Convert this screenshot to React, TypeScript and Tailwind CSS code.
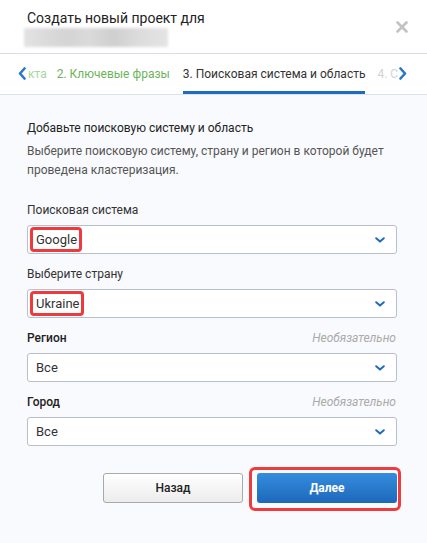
import React from "react";

function Chevron({ className }: { className?: string }) {
  return (
    <svg width="10" height="6" viewBox="0 0 10 6" className={className}>
      <path d="M1.2 1.2 L5 4.6 L8.8 1.2" fill="none" stroke="#1f6bc0" strokeWidth="2" strokeLinecap="round" strokeLinejoin="round" />
    </svg>
  );
}

function Marked({ children }: { children: React.ReactNode }) {
  return (
    <span className="relative">
      {children}
      <span className="absolute -left-[6px] -right-[5px] -top-[5px] -bottom-[5px] border-[3px] border-[#ec3a3d] rounded-[4px]" />
    </span>
  );
}

function Field({
  label,
  value,
  optional,
  strong,
}: {
  label: string;
  value: React.ReactNode;
  optional?: boolean;
  strong?: boolean;
}) {
  return (
    <div className="flex flex-col gap-[6px]">
      <div className="flex justify-between items-center h-[18px]">
        <span className={strong ? "text-[12px] font-medium text-[#222]" : "text-[12px] text-[#333]"}>{label}</span>
        {optional && <span className="text-[12px] italic text-[#aaa] pr-[1px]">Необязательно</span>}
      </div>
      <div className="h-[29px] flex items-center justify-between bg-white border border-[#b9c0cc] rounded-[3px] pl-[8px] pr-[11px] text-[13px] text-[#333]">
        <span>{value}</span>
        <Chevron />
      </div>
    </div>
  );
}

export default function App() {
  return (
    <div className="w-[427px] h-[543px] bg-[#f9fafd] font-['Roboto',sans-serif] overflow-hidden">
      <div className="relative h-[54px] bg-white border-b border-[#d8dfec] pl-[27px] pt-[9px]">
        <div className="text-[14px] leading-[18px] text-[#222]">Создать новый проект для</div>
        <div className="-ml-[3px] mt-[1px] w-[144px] h-[19px] bg-[linear-gradient(90deg,#e2e2e2,#d4d4d4_30%,#dadada_45%,#cfcfcf_62%,#dcdcdc_80%,#e4e4e4)] blur-[1.5px]" />
        <svg className="absolute left-[396px] top-[21px]" width="12" height="12" viewBox="0 0 12 12">
          <path d="M1.5 1.5 L10.5 10.5 M10.5 1.5 L1.5 10.5" stroke="#c2c2c2" strokeWidth="2.6" strokeLinecap="round" />
        </svg>
      </div>

      <div className="h-[41px] bg-white border-b border-[#dde3ee] flex items-stretch pl-[18px] text-[12px] whitespace-nowrap overflow-hidden">
        <div className="flex items-center shrink-0 pb-[1px]">
          <svg width="8" height="13" viewBox="0 0 8 13">
            <path d="M6.5 1.5 L2 6.5 L6.5 11.5" fill="none" stroke="#2a77c9" strokeWidth="2.6" strokeLinecap="round" strokeLinejoin="round" />
          </svg>
        </div>
        <div className="flex items-center shrink-0 ml-[2px] text-[#a9d59c]">кта</div>
        <div className="flex items-center shrink-0 ml-[10px] text-[#6db35b]">2. Ключевые фразы</div>
        <div className="flex items-center shrink-0 ml-[13px] text-[#333] border-b-[3px] border-[#1f6bbd] pt-[3px]">3. Поисковая система и область</div>
        <div className="flex items-center shrink-0 ml-[12px] text-[#d2d2d2]">4. С</div>
        <div className="flex items-center shrink-0 ml-[1px] pb-[1px]">
          <svg width="8" height="13" viewBox="0 0 8 13">
            <path d="M1.5 1.5 L6 6.5 L1.5 11.5" fill="none" stroke="#2a77c9" strokeWidth="2.6" strokeLinecap="round" strokeLinejoin="round" />
          </svg>
        </div>
      </div>

      <div className="pl-[27px] pr-[30px] pt-[24px]">
        <div className="text-[12px] leading-[18px] text-[#222]">Добавьте поисковую систему и область</div>
        <div className="mt-[5px] text-[12px] leading-[19px] text-[#555]">
          Выберите поисковую систему, страну и регион в которой будет проведена кластеризация.
        </div>

        <div className="mt-[21px] flex flex-col gap-[11px]">
          <Field label="Поисковая система" value={<Marked>Google</Marked>} />
          <Field label="Выберите страну" value={<Marked>Ukraine</Marked>} />
          <Field label="Регион" value="Все" optional strong />
          <Field label="Город" value="Все" optional strong />
        </div>

        <div className="mt-[27px] flex justify-end gap-[14px]">
          <button className="w-[140px] h-[30px] rounded-[3px] border border-[#a9a9a9] bg-[linear-gradient(#ffffff,#ececec)] text-[12px] font-medium text-[#222]">
            Назад
          </button>
          <div className="relative">
            <button className="w-[140px] h-[30px] rounded-[3px] bg-[linear-gradient(#358ddd,#1d68bb)] text-[12px] font-bold text-white">
              Далее
            </button>
            <span className="absolute -left-[8px] -right-[4px] -top-[6px] -bottom-[8px] border-[3px] border-[#ef3b3d] rounded-[6px]" />
          </div>
        </div>
      </div>
    </div>
  );
}
